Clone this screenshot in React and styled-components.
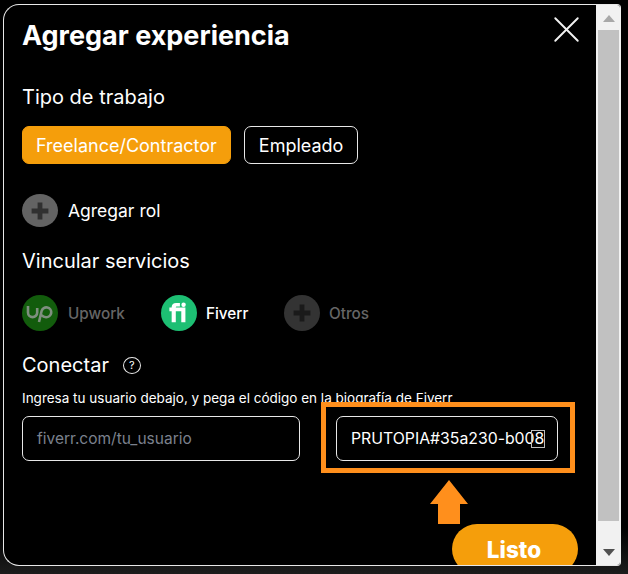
import React from 'react';
import styled, {createGlobalStyle} from 'styled-components';
import {X} from 'lucide-react';

const GlobalStyle = createGlobalStyle`
    html, body {
        margin: 0;
        padding: 0;
        background: #0c0c0c;
    }
    body {
        font-family: "Inter", "Liberation Sans", sans-serif;
        color: #fff;
    }
`;

const Page = styled.div`
    position: relative;
    width: 628px;
    height: 574px;
    overflow: hidden;
    padding: 4px 7px 8px 3px;
    box-sizing: border-box;
    background: linear-gradient(180deg, #000 0%, #000 92%, #1c1c1c 100%);
`;

const Modal = styled.div`
    height: 100%;
    display: flex;
    box-sizing: border-box;
    background: #000;
    border: 1px solid #e8e8e8;
    border-right-color: #f1f1f1;
    border-radius: 16px 4px 4px 16px;
    overflow: hidden;
`;

const Content = styled.div`
    flex: 1;
    min-width: 0;
    padding: 0 18px;
    display: flex;
    flex-direction: column;
    overflow: hidden;
`;

const Header = styled.div`
    display: flex;
    flex: none;
    justify-content: space-between;
    align-items: center;
    height: 60px;
    padding-top: 1px;
    box-sizing: border-box;
`;

const Title = styled.h1`
    margin: 0;
    font-size: 27px;
    font-weight: 700;
    line-height: 32px;
`;

const CloseButton = styled.button`
    display: flex;
    padding: 0;
    margin: -17px -11px -5px 0;
    border: 0;
    background: none;
    color: #f2f2f2;
`;

const SectionTitle = styled.h2`
    margin: ${({$top}) => $top}px 0 0;
    flex: none;
    font-size: 20px;
    font-weight: 400;
    line-height: 24px;
    display: flex;
    align-items: center;
    gap: 14px;
`;

const TypeRow = styled.div`
    display: flex;
    flex: none;
    gap: 13px;
    margin-top: 17px;
`;

const TypeButton = styled.button`
    height: 38px;
    padding: 0 ${({$active}) => ($active ? 13 : 14)}px;
    box-sizing: border-box;
    border-radius: 7px;
    border: 1px solid ${({$active}) => ($active ? '#f59e0b' : '#e8e8e8')};
    background: ${({$active}) => ($active ? '#f59e0b' : '#000')};
    color: #fff;
    font-family: inherit;
    font-size: 18px;
`;

const AddRole = styled.div`
    display: flex;
    flex: none;
    align-items: center;
    gap: 10px;
    margin-top: 30px;
    font-size: 17.5px;
`;

const ServiceRow = styled.div`
    display: flex;
    flex: none;
    align-items: center;
    margin-top: 22px;
`;

const Service = styled.div`
    display: flex;
    align-items: center;
    gap: ${({$gap}) => $gap}px;
    width: ${({$width}) => $width}px;
    font-size: 15.3px;
    font-weight: 500;
    color: ${({$dim}) => ($dim ? '#666' : '#fff')};
`;

const RoundIcon = styled.span`
    width: 36px;
    height: ${({$height}) => $height || 36}px;
    flex: none;
    border-radius: 50%;
    display: flex;
    align-items: center;
    justify-content: center;
    background: ${({$bg}) => $bg};
`;

const HelpBadge = styled.span`
    width: 18px;
    height: 17px;
    box-sizing: border-box;
    border: 1px solid #e8e8e8;
    border-radius: 50%;
    display: flex;
    align-items: center;
    justify-content: center;
    font-size: 11px;
`;

const Hint = styled.p`
    margin: 11px 0 0;
    flex: none;
    font-size: 13.5px;
    line-height: 20px;
    white-space: nowrap;
`;

const InputRow = styled.div`
    display: flex;
    flex: none;
    gap: 36px;
    margin-top: 8px;
`;

const Field = styled.div`
    width: ${({$width}) => $width}px;
    height: 45px;
    box-sizing: border-box;
    border: 1px solid #e8e8e8;
    border-radius: 7px;
    padding: 0 14px;
    display: flex;
    align-items: center;
    font-size: ${({$placeholder}) => ($placeholder ? 15.5 : 15.8)}px;
    white-space: nowrap;
    color: ${({$placeholder}) => ($placeholder ? '#7b818d' : '#fff')};
`;

const Caret = styled.span`
    position: absolute;
    left: 531px;
    top: 430px;
    width: 14px;
    height: 18px;
    border: 1px solid #bdbdbd;
    box-sizing: border-box;
`;

const Highlight = styled.div`
    position: absolute;
    left: 321px;
    top: 402px;
    width: 254px;
    height: 71px;
    box-sizing: border-box;
    border: 5px solid #ff8f1c;
`;

const Arrow = styled.svg`
    position: absolute;
    left: 430px;
    top: 480px;
`;

const Footer = styled.div`
    display: flex;
    flex: none;
    justify-content: flex-end;
    margin-top: 63px;
`;

const DoneButton = styled.button`
    width: 126px;
    height: 50px;
    flex: none;
    padding: 0 2px 0 0;
    border: 0;
    border-radius: 25px;
    background: #f59e0b;
    color: #fff;
    font-family: inherit;
    font-size: 22.5px;
    font-weight: 800;
`;

const Scrollbar = styled.div`
    width: 24px;
    flex: none;
    background: #f1f1f1;
    padding: 0 1px 0 2px;
    box-sizing: border-box;
    display: flex;
    flex-direction: column;
`;

const ScrollArrow = styled.div`
    height: ${({$height}) => $height}px;
    flex: none;
    box-sizing: border-box;
    padding-top: ${({$offset}) => $offset}px;
    display: flex;
    justify-content: center;
`;

const ScrollThumb = styled.div`
    flex: 1;
    background: #c1c1c1;
`;

function Plus({color}) {
    return (
        <svg width="24" height="24" viewBox="0 0 20 20">
            <path d="M8 3h4v5h5v4h-5v5H8v-5H3V8h5z" fill={color} />
        </svg>
    );
}

function UpworkLogo() {
    return (
        <svg width="28" height="22" viewBox="0 0 28 22" fill="none" stroke="#7f8f7f" strokeWidth="2.6">
            <path d="M2 4v6.500a4.600 4.600 0 0 0 9.200 0V6" />
            <path d="M13 20l2.600-11a4.900 4.900 0 1 1 4.400 6.200c-2 0-3.400-.8-4.500-2" />
        </svg>
    );
}

function FiverrLogo() {
    return (
        <svg width="22" height="22" viewBox="0 0 24 24" fill="#fff">
            <path d="M4 22V10H1.500V6H4V5.500C4 2.700 6 1 8.800 1H13v4H9.800C8.800 5 8.500 5.500 8.500 6.200V6H19v16h-4.500V10H8.500v12z" />
            <circle cx="17" cy="3" r="2.400" />
        </svg>
    );
}

export default function App() {
    return (
        <>
            <GlobalStyle />
            <Page>
                <Modal>
                    <Content>
                        <Header>
                            <Title>Agregar experiencia</Title>
                            <CloseButton aria-label="Cerrar">
                                <X size={45} strokeWidth={1} />
                            </CloseButton>
                        </Header>

                        <SectionTitle $top={20}>Tipo de trabajo</SectionTitle>
                        <TypeRow>
                            <TypeButton $active>Freelance/Contractor</TypeButton>
                            <TypeButton>Empleado</TypeButton>
                        </TypeRow>

                        <AddRole>
                            <RoundIcon $bg="#636363" $height={33}>
                                <Plus color="#303030" />
                            </RoundIcon>
                            Agregar rol
                        </AddRole>

                        <SectionTitle $top={22}>Vincular servicios</SectionTitle>
                        <ServiceRow>
                            <Service $dim $width={139} $gap={10}>
                                <RoundIcon $bg="#125c0c">
                                    <UpworkLogo />
                                </RoundIcon>
                                Upwork
                            </Service>
                            <Service $width={123} $gap={9}>
                                <RoundIcon $bg="#1dbf73">
                                    <FiverrLogo />
                                </RoundIcon>
                                Fiverr
                            </Service>
                            <Service $dim $width={100} $gap={9}>
                                <RoundIcon $bg="#333">
                                    <Plus color="#1a1a1a" />
                                </RoundIcon>
                                Otros
                            </Service>
                        </ServiceRow>

                        <SectionTitle $top={22}>
                            Conectar
                            <HelpBadge>?</HelpBadge>
                        </SectionTitle>
                        <Hint>Ingresa tu usuario debajo, y pega el código en la biografía de Fiverr</Hint>
                        <InputRow>
                            <Field $width={278} $placeholder>fiverr.com/tu_usuario</Field>
                            <Field $width={222}>PRUTOPIA#35a230-b008</Field>
                        </InputRow>

                        <Footer>
                            <DoneButton>Listo</DoneButton>
                        </Footer>
                    </Content>
                    <Scrollbar>
                        <ScrollArrow $height={25} $offset={10}>
                            <svg width="12" height="7"><path d="M6 0l6 7H0z" fill="#a8a8a8" /></svg>
                        </ScrollArrow>
                        <ScrollThumb />
                        <ScrollArrow $height={44} $offset={28}>
                            <svg width="12" height="7"><path d="M0 0h12L6 7z" fill="#505050" /></svg>
                        </ScrollArrow>
                    </Scrollbar>
                </Modal>
                <Caret />
                <Highlight />
                <Arrow width="38" height="44" viewBox="0 0 38 44">
                    <path d="M19 0L38 24H30V44H8V24H0z" fill="#ff8f1c" />
                </Arrow>
            </Page>
        </>
    );
}
